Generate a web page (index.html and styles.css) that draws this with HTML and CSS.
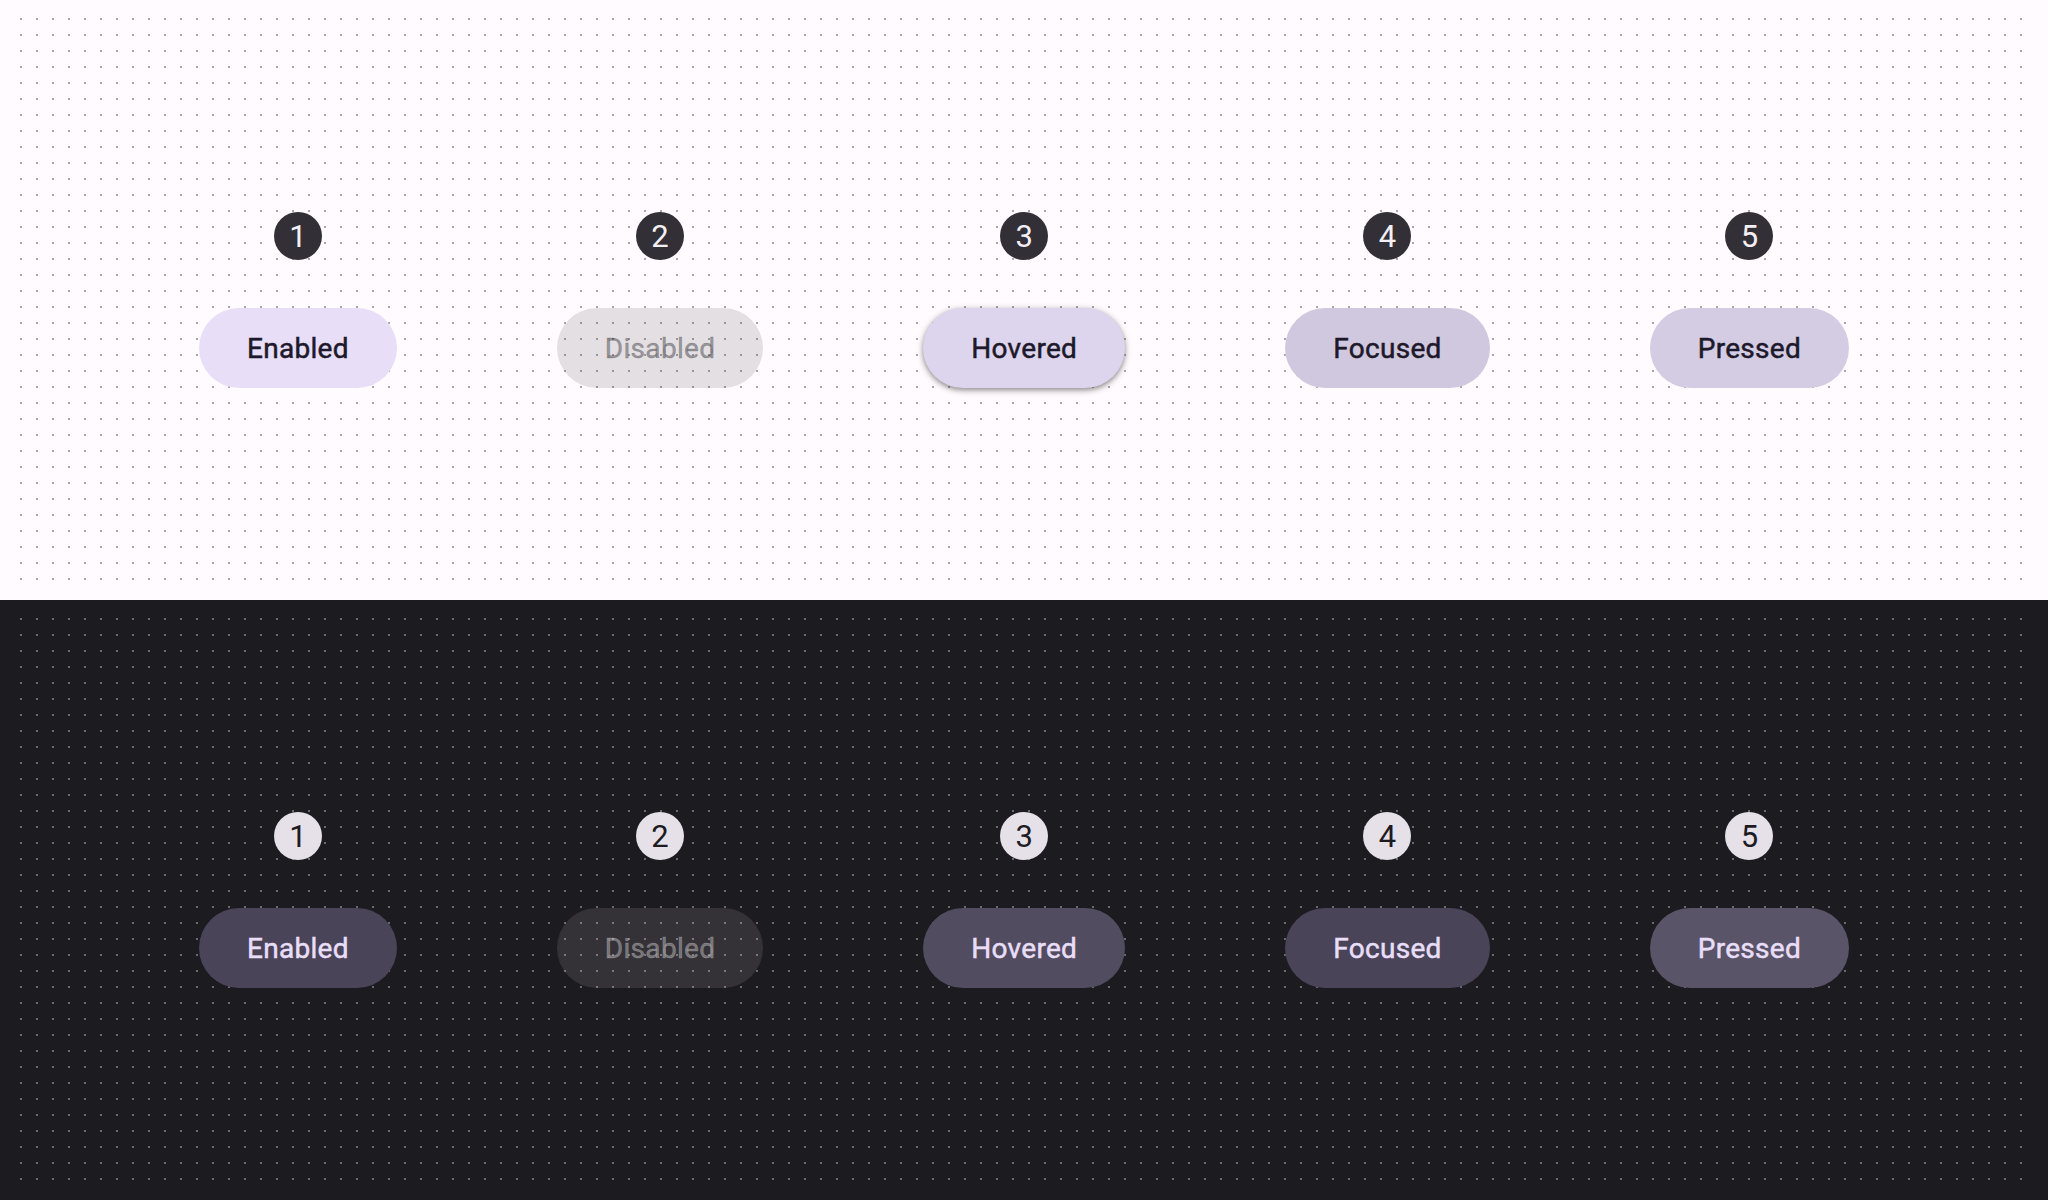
FILE: index.html
```html
<!DOCTYPE html>
<html lang="en">
<head>
<meta charset="utf-8">
<title>Tonal buttons states</title>
<link rel="stylesheet" href="styles.css">
</head>
<body>
<section class="panel light">
  <div class="row">
    <div class="item"><span class="badge">1</span><button class="btn enabled">Enabled</button></div>
    <div class="item"><span class="badge">2</span><button class="btn disabled">Disabled</button></div>
    <div class="item"><span class="badge">3</span><button class="btn hovered">Hovered</button></div>
    <div class="item"><span class="badge">4</span><button class="btn focused">Focused</button></div>
    <div class="item"><span class="badge">5</span><button class="btn pressed">Pressed</button></div>
  </div>
</section>
<section class="panel dark">
  <div class="row">
    <div class="item"><span class="badge">1</span><button class="btn enabled">Enabled</button></div>
    <div class="item"><span class="badge">2</span><button class="btn disabled">Disabled</button></div>
    <div class="item"><span class="badge">3</span><button class="btn hovered">Hovered</button></div>
    <div class="item"><span class="badge">4</span><button class="btn focused">Focused</button></div>
    <div class="item"><span class="badge">5</span><button class="btn pressed">Pressed</button></div>
  </div>
</section>
</body>
</html>
```
FILE: styles.css
```css
* { box-sizing: border-box; }
html, body { margin: 0; padding: 0; }
body {
  width: 2048px;
  height: 1200px;
  overflow: hidden;
  font-family: Roboto, "Noto Sans", sans-serif;
}
.panel {
  height: 600px;
  padding: 18px 20px;
  display: flex;
  align-items: center;
  justify-content: center;
}
.light {
  background:
    radial-gradient(circle at 1px 1px, #a9a7ab 1.1px, transparent 1.4px) 0 0 / 16px 16px repeat content-box content-box,
    linear-gradient(#fffbfe, #fffbfe) border-box;
}
.dark {
  background:
    radial-gradient(circle at 1px 1px, #6b6970 1.1px, transparent 1.4px) 0 0 / 16px 16px repeat content-box content-box,
    linear-gradient(#1c1b1f, #1c1b1f) border-box;
}
.row {
  display: flex;
  gap: 160px;
  align-items: flex-start;
}
.item {
  display: flex;
  flex-direction: column;
  align-items: center;
  gap: 48px;
}
.badge {
  width: 48px;
  height: 48px;
  border-radius: 50%;
  display: flex;
  align-items: center;
  justify-content: center;
  font-size: 31px;
  font-weight: 400;
  line-height: 1;
}
.light .badge { background: #322f37; color: #f4eff4; }
.dark .badge { background: #e6e0e9; color: #1c1b1f; }
.btn {
  height: 80px;
  padding: 2px 48px 0;
  border: none;
  border-radius: 40px;
  font-family: Roboto, "Noto Sans", sans-serif;
  font-size: 28px;
  font-weight: 400;
  -webkit-text-stroke: 0.5px currentColor;
  letter-spacing: 0.3px;
  line-height: 1;
  cursor: pointer;
}
.light .btn { color: #1d192b; }
.light .enabled { background: #e8def8; }
.light .disabled { background: rgba(28, 27, 31, 0.12); color: rgba(28, 27, 31, 0.38); }
.light .hovered {
  background: #ddd5ed;
  box-shadow: 0 2px 4px rgba(0, 0, 0, 0.3), 0 2px 6px 2px rgba(0, 0, 0, 0.15);
}
.light .focused { background: #d0c8de; }
.light .pressed { background: #d4cce3; }

.dark .btn { color: #e8def8; }
.dark .enabled { background: #4a4458; }
.dark .disabled { background: rgba(230, 225, 229, 0.12); color: rgba(230, 225, 229, 0.38); }
.dark .hovered { background: #524c60; }
.dark .focused { background: #4a4458; }
.dark .pressed { background: #5a5468; }
```
